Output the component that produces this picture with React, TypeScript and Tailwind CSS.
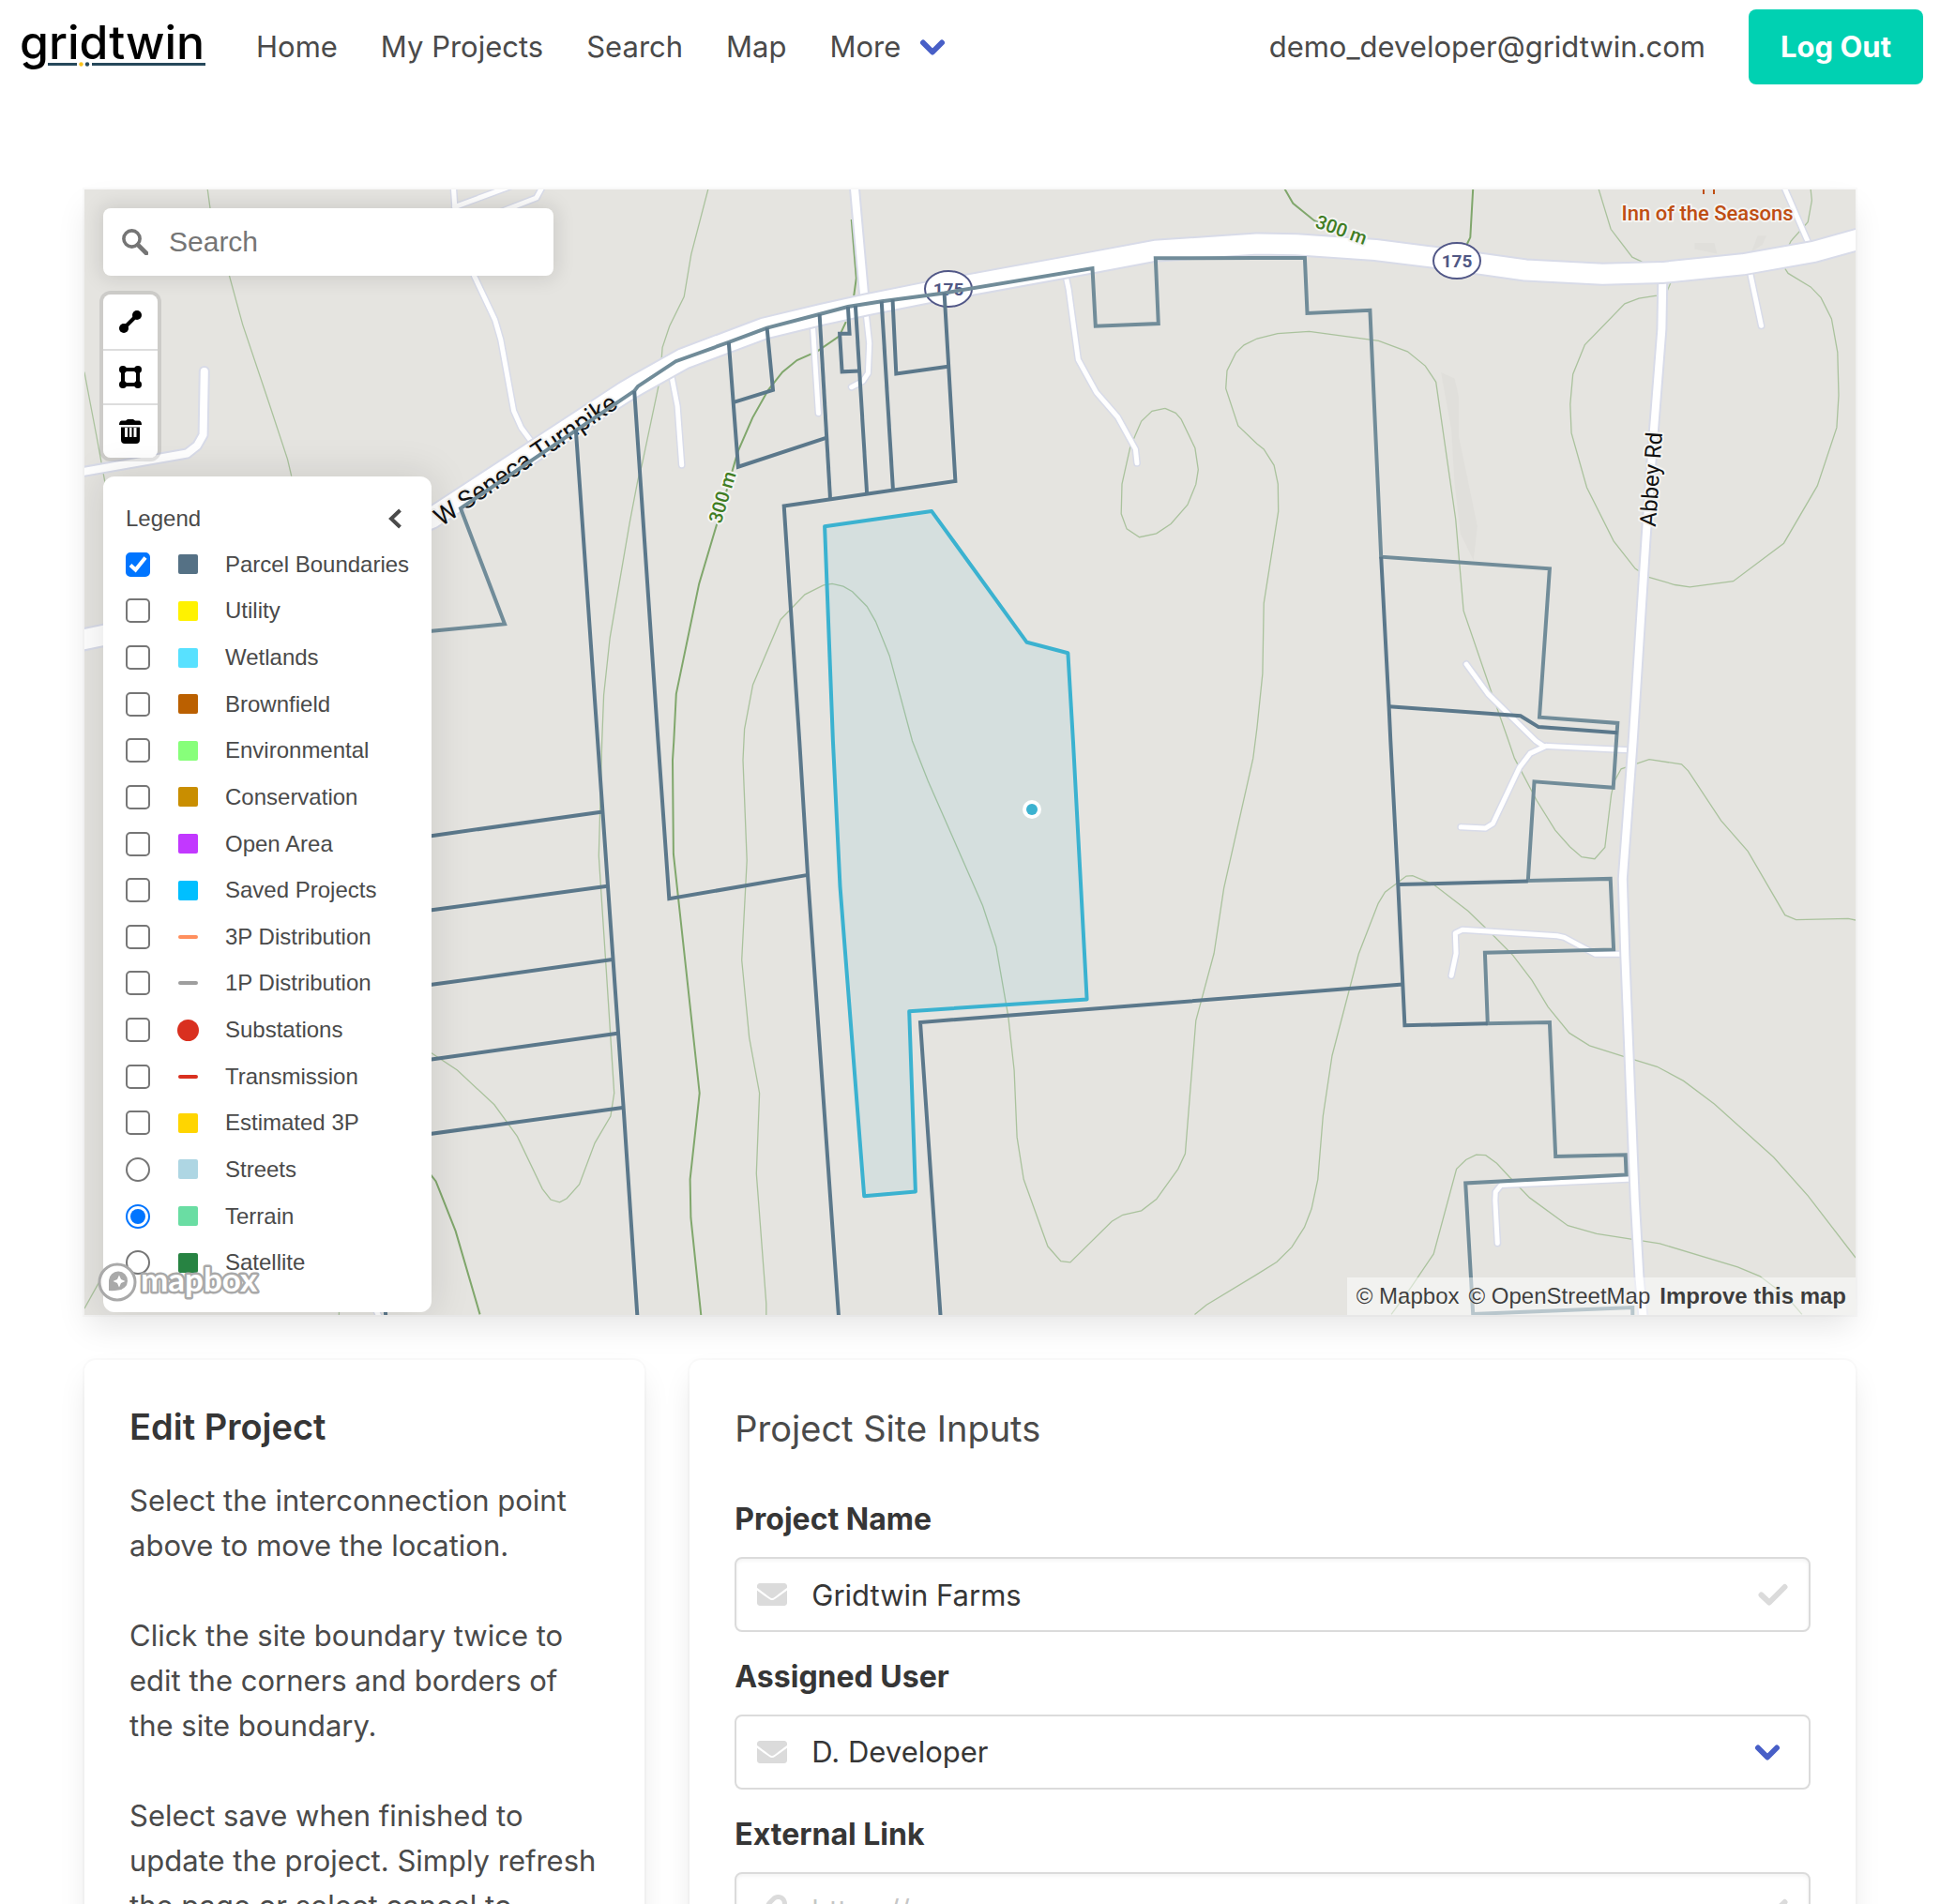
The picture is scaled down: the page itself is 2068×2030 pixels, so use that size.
import type { ReactNode } from "react";

/* ---------- Map geometry ---------- */

type SheetName = "nw" | "n" | "ne" | "sw" | "s" | "se";
type Segment = [SheetName, string];

// The survey is split in six sheets, each with its own 1568-unit grid.
const sheets: Record<SheetName, { x: number; y: number; w: number; h: number }> = {
  nw: { x: 80, y: 190, w: 600, h: 600 },
  n: { x: 680, y: 190, w: 660, h: 600 },
  ne: { x: 1340, y: 190, w: 660, h: 600 },
  sw: { x: 80, y: 790, w: 600, h: 640 },
  s: { x: 680, y: 790, w: 660, h: 640 },
  se: { x: 1340, y: 790, w: 660, h: 640 },
};

function project(...segments: Segment[]): string {
  return segments
    .flatMap(([name, points]) => {
      const sheet = sheets[name];
      return points.split(" ").map((pair) => {
        const [px, py] = pair.split(",").map(Number);
        const x = sheet.x + (px * sheet.w) / 1568;
        const y = sheet.y + (py * sheet.h) / 1568;
        return `${x.toFixed(1)},${y.toFixed(1)}`;
      });
    })
    .join(" ");
}

const contours: string[] = [
  project(["nw", "369,30 377,90 430,272 467,408 540,625 592,783 603,830"]),
  project(["nw", "26,540 60,720 84,850"]),
  project(
    ["n", "178,30 135,212 117,330 80,412 62,472 60,500 52,580 10,800"],
    ["nw", "1568,840 1545,960 1490,1280 1473,1440 1468,1568"],
    ["sw", "1459,300 1480,600 1502,920 1492,980 1448,1050 1405,1158 1370,1195 1350,1205 1325,1198 1302,1170 1232,1033 1168,950 1065,860 993,815 900,770"],
  ),
  project(["sw", "66,1415 26,1483"]),
  project(["sw", "736,1480 735,1505"]),
  project(
    ["s", "325,1500 325,1470 300,1130 308,920 282,775 263,572 276,312 266,50"],
    ["n", "270,1535 291,1412 361,1230 423,1160 470,1134 492,1130 520,1137 543,1152 580,1193 602,1235 637,1330 695,1568"],
    ["s", "735,105 873,430 907,537 938,720 953,860 960,1035 977,1145 1038,1320 1071,1359 1095,1362 1200,1255 1228,1238 1275,1227 1313,1197 1368,1118 1386,1078 1413,730 1459,555 1484,385 1558,45"],
    ["ne", "0,1530 14,1380 17,1185 54,928 53,852 43,800 17,755 0,740"],
    ["n", "1520,690 1489,586 1492,536 1514,487 1535,465 1568,447"],
    ["ne", "52,433 132,427 308,453 381,483 426,523 453,568 503,950 523,1205 593,1430 637,1568"],
    ["se", "652,45 708,155 755,233 792,276 822,303 855,308 881,278 897,140 905,105 922,73 993,48 1075,61 1092,78 1175,208 1243,288 1337,455 1365,467 1497,464 1520,469"],
  ),
  project(["n", "1335,641 1362,654 1376,672 1411,752 1419,812 1413,853 1392,910 1350,963 1313,990 1270,1000 1238,977 1224,935 1226,852 1247,748 1275,677 1302,649 1335,641"]),
  project(["ne", "1047,293 1037,318 1012,327 967,335 931,350 830,464 800,546 793,630 796,710 835,862 903,1011 958,1088 990,1111 1058,1133 1096,1139 1206,1123 1334,1017 1419,857 1468,695 1473,605 1470,485 1455,392 1428,333 1402,303 1345,265 1337,252"]),
  project(["ne", "865,30 896,142 950,220 975,233"]),
  project(["ne", "1402,30 1405,62 1395,122 1352,175 1347,187"]),
  project(
    ["s", "1410,1498 1440,1473 1568,1393"],
    ["se", "50,1361 88,1322 120,1270 138,1222 154,1145 167,980 190,822 257,557 307,424 324,395 378,353 394,352 447,375 535,445 598,508 648,560 696,625 737,695 791,763 842,796 930,825 1013,851 1080,888 1158,948 1308,1087 1395,1188 1516,1350"],
  ),
  project(["se", "340,1498 390,1427 447,1340 505,1118 529,1094 555,1081 579,1082 607,1103 640,1140 690,1193 787,1266 860,1287 1020,1313 1217,1374 1273,1398 1340,1450 1380,1498"]),
];

const indexContours: string[] = [
  project(["n", "541,115 553,278 547,328"]),
  project(
    ["n", "527,400 510,440 455,482 403,507 366,540 330,590 290,668 253,762 205,945 155,1130 97,1437 91,1568"],
    ["s", "88,50 90,295 156,920 132,1145 134,1245 160,1500"],
  ),
  project(["sw", "980,1120 1005,1150 1060,1280 1128,1498"]),
  project(["ne", "70,30 91,70 145,118 160,125"]),
  project(["ne", "547,30 540,165 532,183"]),
];

const lanes: string[] = [
  project(["n", "577,370 586,460 583,543 570,565 541,582"]),
  project(["n", "85,550 100,635 111,799"]),
  project(["n", "443,415 457,655"]),
  project(["n", "1083,270 1091,310 1115,505 1161,597 1215,665 1260,755 1264,794"]),
  project(["nw", "1054,20 1058,80 1112,272 1170,395 1186,450 1222,648 1243,695 1276,740"]),
  project(["nw", "1058,80 1220,20"]),
  project(["nw", "1190,92 1285,55 1304,20"]),
  project(["ne", "1333,20 1397,182"]),
  project(["ne", "1248,260 1277,411"]),
  project(["ne", "530,1354 585,1437 706,1568"], ["se", "725,13 943,24"]),
  project(["se", "733,13 692,32 664,70 597,216 578,228 516,225"]),
  project(["se", "930,557 857,557 778,513 760,509 520,493 502,502 504,555 492,613"]),
  project(["se", "950,1144 618,1160 604,1178 603,1200 609,1312"]),
  project(["sw", "835,1480 850,1510"]),
];

const streets: string[] = [
  project(["n", "548,20 574,340"]),
  project(["nw", "360,538 357,715 340,745 312,767 10,820"]),
  project(["ne", "1027,280 1025,420 1005,700 985,1000 952,1568"], ["se", "926,360 932,560 945,900 957,1200 968,1400 978,1510"]),
];

const turnpike = project(
  ["nw", "10,1288 78,1274 400,1200 993,947 1530,596"],
  ["n", "0,574 115,503 318,419 465,380 580,352 727,320 1140,237 1310,202 1568,183"],
  ["ne", "100,185 300,200 445,220 680,256 875,267 1025,263 1230,240 1410,205 1530,168"],
);

const outerParcels: string[] = [
  project(
    ["nw", "960,1265 1197,1242 1074,920 1558,593"],
    ["n", "0,580 96,510 230,457 327,417 460,379 532,358 618,343 776,320 1151,251 1159,412 1318,405 1311,223 1568,222"],
    ["ne", "121,222 127,376 286,368 314,1055 741,1088 715,1502 913,1518 910,1568"],
    ["se", "902,122 702,106 686,365 895,360 903,545 577,553 584,738 741,735 756,1085 933,1081 935,1133 528,1155 547,1497 951,1480 951,1510"],
  ),
];

const sharedParcels: string[] = [
  project(["ne", "314,1055 334,1472 338,1568"], ["se", "357,375 374,743 584,738"]),
  project(["ne", "334,1472 667,1498 713,1529 913,1545"]),
  project(["se", "357,375 686,366"]),
  project(["se", "369,636"], ["s", "715,735 767,1510"]),
  project(["nw", "1395,700 1456,1568"], ["sw", "1528,960 1567,1510"]),
  project(["nw", "1558,593"], ["n", "51,1568"], ["s", "79,412 430,350"]),
  project(["s", "509,1510 430,350 409,0"], ["n", "370,913 804,844 776,320"]),
  project(["n", "460,379 487,893"]),
  project(["n", "551,355 580,878"]),
  project(["n", "617,343 646,866"]),
  project(["n", "645,338 654,545 790,524"]),
  project(["n", "230,457 254,804 480,722"]),
  project(["n", "241,625 342,590 327,417"]),
  project(["n", "532,358 536,433 511,433 517,539 562,537"]),
  project(["sw", "960,252 1470,185"]),
  project(["sw", "960,446 1483,379"]),
  project(["sw", "960,641 1497,571"]),
  project(["sw", "960,836 1511,764"]),
  project(["sw", "960,1030 1525,958"]),
  project(["sw", "864,1480 866,1510"]),
];

const site = project(
  ["n", "473,970 744,928 985,1293 1089,1323"],
  ["s", "1102,0 1137,675 687,706 703,1177 573,1189 512,380 494,0"],
);

const fields: string[] = [
  project(["ne", "466,541 500,558 511,610 511,720 558,970 548,1065 515,990 500,850 492,700"]),
  project(["ne", "1108,180 1158,180 1165,210 1108,197"]),
  project(["ne", "1268,160 1290,160 1280,185 1252,205"]),
];

function Road({ points, width, casing }: { points: string[]; width: number; casing: number }) {
  return (
    <g fill="none" strokeLinejoin="round" strokeLinecap="round">
      {points.map((p) => (
        <polyline key={p} points={p} stroke="#d8dbe8" strokeWidth={casing} />
      ))}
      {points.map((p) => (
        <polyline key={p} points={p} stroke="#ffffff" strokeWidth={width} />
      ))}
    </g>
  );
}

function Shield({ x, y }: { x: number; y: number }) {
  return (
    <g>
      <ellipse cx={x} cy={y} rx="25" ry="19" fill="#ffffff" stroke="#515787" strokeWidth="2" />
      <text x={x} y={y + 7} textAnchor="middle" fontSize="19" fontWeight="700" fill="#505784">
        175
      </text>
    </g>
  );
}

type MapLabelProps = { x: number; y: number; angle: number; size: number; color: string; weight?: number; children: ReactNode };

function MapLabel({ x, y, angle, size, color, weight = 400, children }: MapLabelProps) {
  return (
    <text
      x={x}
      y={y}
      dy="0.35em"
      transform={`rotate(${angle} ${x} ${y})`}
      textAnchor="middle"
      fontSize={size}
      fontWeight={weight}
      fill={color}
      stroke="#f4f4f2"
      strokeWidth="4"
      strokeLinejoin="round"
      paintOrder="stroke"
    >
      {children}
    </text>
  );
}

function TerrainMap() {
  return (
    <svg
      className="block h-full w-full bg-[#e5e4e0] font-[Roboto,sans-serif]"
      viewBox="90 202 1888 1200"
      preserveAspectRatio="xMidYMid slice"
      role="img"
      aria-label="Terrain map"
    >
      {fields.map((p) => (
        <polygon key={p} points={p} fill="#e0dfdb" />
      ))}
      <g fill="none" stroke="#aac29d" strokeWidth="1.3">
        {contours.map((p) => (
          <polyline key={p} points={p} />
        ))}
      </g>
      <g fill="none" stroke="#80a76c" strokeWidth="2">
        {indexContours.map((p) => (
          <polyline key={p} points={p} />
        ))}
      </g>
      <Road points={lanes} width={5} casing={8} />
      <Road points={streets} width={8} casing={12} />
      <Road points={[turnpike]} width={21} casing={25} />
      <MapLabel x={560} y={490} angle={-34} size={27} color="#111111">W Seneca Turnpike</MapLabel>
      <MapLabel x={1760} y={511} angle={-86} size={24} color="#111111">Abbey Rd</MapLabel>
      <MapLabel x={770} y={530} angle={-73} size={20} color="#3f7d24" weight={500}>300 m</MapLabel>
      <MapLabel x={1430} y={245} angle={20} size={20} color="#3f7d24" weight={500}>300 m</MapLabel>
      <MapLabel x={1820} y={227} angle={0} size={22} color="#bf4e12" weight={500}>Inn of the Seasons</MapLabel>
      <path d="M1816 202v5M1827 202v5" stroke="#bf4e12" strokeWidth="2" />
      <Shield x={1011} y={308} />
      <Shield x={1553} y={278} />
      <g fill="none" strokeWidth="4">
        {outerParcels.map((p) => (
          <polyline key={p} points={p} stroke="#718c99" />
        ))}
        {sharedParcels.map((p) => (
          <polyline key={p} points={p} stroke="#5b788b" />
        ))}
      </g>
      <polygon points={site} fill="#3bb2d0" fillOpacity="0.09" stroke="#3bb2d0" strokeWidth="4" strokeLinejoin="round" />
      <circle cx="1100" cy="863" r="10" fill="#ffffff" />
      <circle cx="1100" cy="863" r="6" fill="#3bb2d0" />
    </svg>
  );
}

/* ---------- Icons ---------- */

function AngleDown() {
  return (
    <svg className="h-[19px] w-[28px]" viewBox="0 0 28 19" fill="none" stroke="#485fc7" strokeWidth="6" strokeLinecap="round" strokeLinejoin="round" aria-hidden="true">
      <path d="M4 4.500 14 14.500 24 4.500" />
    </svg>
  );
}

function Envelope() {
  return (
    <svg className="h-6 w-8" viewBox="0 64 512 384" fill="#dbdbdb" aria-hidden="true">
      <path d="M502.300 190.800c3.900-3.100 9.700-.2 9.700 4.700V400c0 26.500-21.500 48-48 48H48c-26.500 0-48-21.500-48-48V195.600c0-5 5.700-7.800 9.700-4.700 22.400 17.400 52.100 39.500 154.100 113.600 21.100 15.400 56.700 47.800 92.200 47.600 35.700.3 72-32.800 92.300-47.600 102-74.100 131.600-96.300 154-113.700zM256 320c23.200.4 56.600-29.200 73.400-41.400 132.700-96.300 142.800-104.700 173.400-128.700 5.800-4.500 9.200-11.500 9.200-18.900v-19c0-26.500-21.500-48-48-48H48c-26.500 0-48 21.500-48 48v19c0 7.400 3.400 14.300 9.200 18.900 30.600 23.900 40.700 32.400 173.400 128.700 16.800 12.200 50.200 41.800 73.400 41.400z" />
    </svg>
  );
}

function Check() {
  return (
    <svg className="h-6 w-8" viewBox="0 0 32 24" fill="none" stroke="#dbdbdb" strokeWidth="6" strokeLinecap="round" strokeLinejoin="round" aria-hidden="true">
      <path d="M3.500 12.500 12 20.500 28.500 4" />
    </svg>
  );
}

function LinkIcon() {
  return (
    <svg className="h-8 w-8" viewBox="0 0 512 512" fill="#dbdbdb" aria-hidden="true">
      <path d="M326.600 185.400c59.700 59.800 58.900 155.700.4 214.600-.1.100-.2.300-.4.400l-67.200 67.200c-59.300 59.300-155.700 59.300-215 0-59.300-59.300-59.300-155.700 0-215l37.100-37.100c9.800-9.800 26.800-3.300 27.300 10.600.6 17.700 3.800 35.500 9.700 52.700 2 5.800.6 12.300-3.800 16.600l-13.100 13.100c-28 28-28.900 73.700-1.200 102 28 28.600 74.100 28.700 102.300.5l67.200-67.200c28.200-28.200 28.100-73.800 0-101.800-3.700-3.700-7.400-6.600-10.300-8.600a16 16 0 0 1-6.900-12.600c-.4-10.600 3.300-21.500 11.700-29.800l21.100-21.100c5.500-5.500 14.200-6.200 20.600-1.700a152.500 152.500 0 0 1 20.500 17.200zM467.500 44.400c-59.300-59.300-155.700-59.300-215 0l-67.200 67.200c-.1.100-.3.300-.4.400-58.600 58.900-59.400 154.800.4 214.600a152.500 152.500 0 0 0 20.500 17.200c6.400 4.500 15.100 3.800 20.600-1.700l21.100-21.100c8.400-8.400 12.100-19.200 11.700-29.800a16 16 0 0 0-6.900-12.600c-2.900-2-6.600-4.900-10.300-8.600-28.100-28.100-28.200-73.600 0-101.800l67.200-67.200c28.200-28.200 74.300-28.100 102.300.5 27.800 28.300 26.900 73.900-1.200 102l-13.100 13.100c-4.400 4.400-5.800 10.800-3.800 16.600 5.900 17.200 9 35 9.700 52.700.5 13.900 17.500 20.400 27.300 10.600l37.100-37.100c59.300-59.300 59.300-155.700 0-215z" />
    </svg>
  );
}

function Logo() {
  return (
    <a href="#" aria-label="gridtwin home" className="block">
      <svg className="block h-[68px] w-[200px]" viewBox="0 0 200 68" aria-hidden="true">
        <text x="0" y="47" fontSize="50" fontWeight="500" fill="#000000" className="font-[Inter,sans-serif]">
          gridtwin
        </text>
        <path d="M30 52.500H61M77 52.500H198" stroke="#27495b" strokeWidth="3" />
        <circle cx="65.500" cy="52.500" r="2.200" fill="#fbc31c" />
        <circle cx="72" cy="52.500" r="2.200" fill="#27495b" />
      </svg>
    </a>
  );
}

/* ---------- Map controls ---------- */

function SearchBox() {
  return (
    <label className="flex h-[72px] items-center rounded-lg bg-white pl-5 shadow-[0_0_20px_4px_rgba(0,0,0,0.1)]">
      <svg className="size-7 shrink-0" viewBox="0 0 28 28" fill="none" stroke="#757575" aria-hidden="true">
        <circle cx="10.500" cy="10.500" r="8.600" strokeWidth="3.600" />
        <path d="M17 17 26 26" strokeWidth="4.600" strokeLinecap="round" />
      </svg>
      <input type="text" placeholder="Search" aria-label="Search" className="ml-[22px] min-w-0 flex-1 bg-transparent text-[30px] leading-9 text-gray-700 outline-none placeholder:text-[#757575]" />
    </label>
  );
}

function DrawTools() {
  const tool = "flex h-[58px] w-[58px] items-center justify-center";
  return (
    <div className="flex w-[58px] flex-col overflow-hidden rounded-lg bg-white">
      <button type="button" aria-label="Draw line" className={tool}>
        <svg className="size-6" viewBox="0 0 24 24" aria-hidden="true">
          <path d="M5 19 19 5" stroke="#000" strokeWidth="4" />
          <circle cx="5" cy="19" r="5" />
          <circle cx="19" cy="5" r="5" />
        </svg>
      </button>
      <button type="button" aria-label="Draw polygon" className={`${tool} border-t-2 border-[#dddddd]`}>
        <svg className="size-6" viewBox="0 0 24 24" aria-hidden="true">
          <path d="M4 4H20V20H4Z" fill="none" stroke="#000" strokeWidth="4" />
          <circle cx="4" cy="4" r="4" />
          <circle cx="20" cy="4" r="4" />
          <circle cx="4" cy="20" r="4" />
          <circle cx="20" cy="20" r="4" />
        </svg>
      </button>
      <button type="button" aria-label="Delete" className={`${tool} border-t-2 border-[#dddddd]`}>
        <svg className="h-[26px] w-6" viewBox="0 0 24 26" aria-hidden="true">
          <path d="M9 0h6l2 1.500h4.500Q24 2 24 6H0Q0 2 2.500 1.500H7Z" />
          <path fillRule="evenodd" d="M2 8.500h20V22q0 4-4 4H6q-4 0-4-4ZM6 9v10h3V9ZM11 9v10h2.500V9ZM15.500 9v10h3V9Z" />
        </svg>
      </button>
    </div>
  );
}

type LegendItem = { label: string; swatch: string; radio?: boolean; checked?: boolean };

const box = "size-[21px] rounded-[2px]";
const dash = "h-1 w-[21px] rounded-full";

const legend: LegendItem[] = [
  { label: "Parcel Boundaries", swatch: `${box} bg-[#557185]`, checked: true },
  { label: "Utility", swatch: `${box} bg-[#fff200]` },
  { label: "Wetlands", swatch: `${box} bg-[#58e1ff]` },
  { label: "Brownfield", swatch: `${box} bg-[#bb6000]` },
  { label: "Environmental", swatch: `${box} bg-[#87ff7a]` },
  { label: "Conservation", swatch: `${box} bg-[#c98e00]` },
  { label: "Open Area", swatch: `${box} bg-[#c238ff]` },
  { label: "Saved Projects", swatch: `${box} bg-[#00bfff]` },
  { label: "3P Distribution", swatch: `${dash} bg-[#ff8f5e]` },
  { label: "1P Distribution", swatch: `${dash} bg-[#9e9e9e]` },
  { label: "Substations", swatch: "size-[23px] rounded-full bg-[#d9301f]" },
  { label: "Transmission", swatch: `${dash} bg-[#d9301f]` },
  { label: "Estimated 3P", swatch: `${box} bg-[#ffd500]` },
  { label: "Streets", swatch: `${box} bg-[#aed6e3]`, radio: true },
  { label: "Terrain", swatch: `${box} bg-[#6adda3]`, radio: true, checked: true },
  { label: "Satellite", swatch: `${box} bg-[#278342]`, radio: true },
];

function LegendRow({ item }: { item: LegendItem }) {
  return (
    <li className="flex items-center">
      <label className="flex items-center">
        <span className="grid size-[26px] place-items-center">
          {item.radio ? (
            <input
              type="radio"
              name="basemap"
              defaultChecked={item.checked}
              className="peer col-start-1 row-start-1 size-[26px] appearance-none rounded-full border-2 border-[#767676] bg-white checked:border-[#0075ff]"
            />
          ) : (
            <input
              type="checkbox"
              defaultChecked={item.checked}
              className="peer col-start-1 row-start-1 size-[26px] appearance-none rounded-[5px] border-2 border-[#767676] bg-white checked:border-[#0075ff] checked:bg-[#0075ff]"
            />
          )}
          {item.radio ? (
            <span className="pointer-events-none col-start-1 row-start-1 hidden size-4 rounded-full bg-[#0075ff] peer-checked:block" />
          ) : (
            <svg className="pointer-events-none col-start-1 row-start-1 hidden size-[26px] peer-checked:block" viewBox="0 0 26 26" fill="none" stroke="#fff" strokeWidth="4" aria-hidden="true">
              <path d="M5 13.500 10.500 18.500 21 5.500" />
            </svg>
          )}
        </span>
        <span className="ml-7 flex w-6 items-center justify-center">
          <span className={item.swatch} />
        </span>
        <span className="ml-7 whitespace-nowrap">{item.label}</span>
      </label>
    </li>
  );
}

function Legend() {
  return (
    <section aria-label="Legend" className="flex h-full w-[350px] flex-col rounded-xl bg-white px-6 pt-6 pb-7 text-2xl text-[#4a4a4a] shadow-[0_0_40px_4px_rgba(0,0,0,0.1)]">
      <header className="flex h-[45px] items-center justify-between pb-1">
        <h2>Legend</h2>
        <button type="button" aria-label="Collapse legend" className="pr-2">
          <svg className="h-[22px] w-[14px]" viewBox="0 0 14 22" fill="none" stroke="#4a4a4a" strokeWidth="4" aria-hidden="true">
            <path d="M12.500 2 3 11 12.500 20" />
          </svg>
        </button>
      </header>
      <ul className="grid flex-1 auto-rows-fr">
        {legend.map((item) => (
          <LegendRow key={item.label} item={item} />
        ))}
      </ul>
    </section>
  );
}

function MapboxLogo() {
  return (
    <a href="#" aria-label="Mapbox" className="block">
      <svg className="h-[46px] w-[180px]" viewBox="0 0 180 46" aria-hidden="true">
        <circle cx="23" cy="23" r="19" fill="#ffffff" fillOpacity="0.9" stroke="#a9a9a9" strokeWidth="3" />
        <path d="M14 32V21a10 10 0 1 1 10 10.500Q19 32.500 14 32Z" fill="#a9a9a9" />
        <path d="M25 15.500 27 20 31.500 22 27 24 25 28.500 23 24 18.500 22 23 20Z" fill="#ffffff" />
        <text x="48" y="33" fontSize="35" fontWeight="700" fill="#ffffff" stroke="#a9a9a9" strokeWidth="5" strokeLinejoin="round" paintOrder="stroke" className="font-[Lato,sans-serif]">
          mapbox
        </text>
      </svg>
    </a>
  );
}

function MapPanel() {
  return (
    <section aria-label="Project map" className="relative h-[1200px] overflow-hidden font-['Liberation_Sans',Arial,sans-serif]">
      <TerrainMap />
      <div className="absolute top-5 left-5 w-[480px]">
        <SearchBox />
      </div>
      <div className="absolute top-[112px] left-5 rounded-lg shadow-[0_0_0_4px_rgba(0,0,0,0.1)]">
        <DrawTools />
      </div>
      <div className="absolute top-[306px] bottom-[3px] left-5">
        <Legend />
      </div>
      <div className="absolute bottom-3 left-3">
        <MapboxLogo />
      </div>
      <div className="absolute right-0 bottom-0 flex h-10 items-center gap-[10px] bg-white/50 px-[10px] text-2xl text-black/75">
        <a href="#">© Mapbox</a>
        <a href="#">© OpenStreetMap</a>
        <a href="#" className="font-bold">
          Improve this map
        </a>
      </div>
    </section>
  );
}

/* ---------- Page ---------- */

const card = "rounded-xl bg-white p-12 shadow-[0_16px_32px_-4px_rgba(10,10,10,0.1),0_0_0_2px_rgba(10,10,10,0.02)]";

function Navbar() {
  return (
    <nav className="flex h-[100px] items-center pr-[18px] pl-[21px]">
      <Logo />
      <div className="ml-[52px] flex flex-1 items-center gap-[46px]">
        <a href="#">Home</a>
        <a href="#">My Projects</a>
        <a href="#">Search</a>
        <a href="#">Map</a>
        <button type="button" className="flex items-center gap-5">
          More
          <AngleDown />
        </button>
      </div>
      <span>demo_developer@gridtwin.com</span>
      <button type="button" className="ml-[46px] h-20 rounded-lg bg-[#00d1b2] px-[34px] font-bold text-white">
        Log Out
      </button>
    </nav>
  );
}

function Field({ id, label, left, right, children }: { id: string; label: string; left: ReactNode; right: ReactNode; children: ReactNode }) {
  return (
    <div>
      <label htmlFor={id} className="mb-4 block text-[32px] leading-12 font-bold text-[#363636]">
        {label}
      </label>
      <div className="relative h-20 text-[#363636]">
        {children}
        <span className="pointer-events-none absolute inset-y-0 left-0 flex w-20 items-center justify-center">{left}</span>
        <span className="pointer-events-none absolute inset-y-0 right-0 flex w-20 items-center justify-center">{right}</span>
      </div>
    </div>
  );
}

const control = "h-full w-full appearance-none rounded-lg border-2 border-[#dbdbdb] bg-white pr-20 pl-20 outline-none placeholder:text-[#363636]/30";

export default function App() {
  return (
    <div className="h-screen overflow-hidden bg-white font-[Inter,sans-serif] text-[31px] leading-12 text-[#4a4a4a]">
      <Navbar />
      <main className="flex flex-col gap-12 px-[90px] pt-[102px]">
        <div className="shadow-[0_16px_32px_-4px_rgba(10,10,10,0.1),0_0_0_2px_rgba(10,10,10,0.02)]">
          <MapPanel />
        </div>
        <div className="grid grid-cols-3 gap-12">
          <section className={card}>
            <h1 className="mb-8 text-[38px] leading-[46px] font-semibold text-[#363636]">Edit Project</h1>
            <div className="flex flex-col gap-12">
              <p>Select the interconnection point above to move the location.</p>
              <p>Click the site boundary twice to edit the corners and borders of the site boundary.</p>
              <p>Select save when finished to update the project. Simply refresh the page or select cancel to discard your changes.</p>
            </div>
          </section>
          <section className={`${card} col-span-2`}>
            <h2 className="mb-12 text-[38px] leading-[50px]">Project Site Inputs</h2>
            <form className="flex flex-col gap-6">
              <Field id="name" label="Project Name" left={<Envelope />} right={<Check />}>
                <input id="name" type="text" defaultValue="Gridtwin Farms" className={`${control} shadow-[inset_0_2px_4px_rgba(10,10,10,0.05)]`} />
              </Field>
              <Field id="user" label="Assigned User" left={<Envelope />} right={<span className="pr-3"><AngleDown /></span>}>
                <select id="user" className={control}>
                  <option>D. Developer</option>
                </select>
              </Field>
              <Field id="link" label="External Link" left={<LinkIcon />} right={<Check />}>
                <input id="link" type="text" placeholder="https://" className={`${control} shadow-[inset_0_2px_4px_rgba(10,10,10,0.05)]`} />
              </Field>
            </form>
          </section>
        </div>
      </main>
    </div>
  );
}
